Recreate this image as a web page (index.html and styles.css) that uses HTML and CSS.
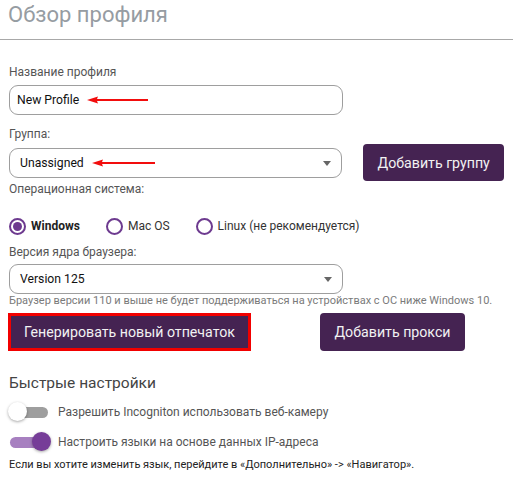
FILE: index.html
```html
<!DOCTYPE html>
<html lang="ru">

<head>
    <meta charset="UTF-8">
    <meta name="viewport" content="width=device-width, initial-scale=1.0">
    <title>Обзор профиля</title>
    <link rel="stylesheet" href="styles.css">
</head>

<body>
    <header class="page-header">
        <h1>Обзор профиля</h1>
    </header>

    <main class="profile-form">
        <label class="field-label label-name">Название профиля</label>
        <div class="field">
            <span class="field-value">New Profile</span>
            <svg class="hint-arrow" width="61" height="8" viewBox="0 0 61 8">
                <path d="M0 4 L11 0.5 L10 3 L61 3 L61 5 L10 5 L11 7.5 Z" fill="#f20d0d" />
            </svg>
        </div>

        <label class="field-label label-group">Группа:</label>
        <div class="group-row">
            <div class="field select">
                <span class="field-value pad">Unassigned</span>
                <svg class="hint-arrow" width="63" height="8" viewBox="0 0 63 8">
                    <path d="M0 4 L11 0.5 L10 3 L63 3 L63 5 L10 5 L11 7.5 Z" fill="#f20d0d" />
                </svg>
                <span class="caret"></span>
            </div>
            <button type="button" class="btn btn-group">Добавить группу</button>
        </div>

        <label class="field-label label-os">Операционная система:</label>
        <div class="radio-row">
            <span class="radio checked"><span class="dot"></span></span>
            <span class="radio-text bold">Windows</span>
            <span class="radio"></span>
            <span class="radio-text">Mac OS</span>
            <span class="radio"></span>
            <span class="radio-text">Linux (не рекомендуется)</span>
        </div>

        <label class="field-label label-version">Версия ядра браузера:</label>
        <div class="field select">
            <span class="field-value pad">Version 125</span>
            <span class="caret"></span>
        </div>
        <div class="helper">Браузер версии 110 и выше не будет поддерживаться на устройствах с ОС ниже Windows 10.</div>

        <div class="button-row">
            <button type="button" class="btn btn-generate">Генерировать новый отпечаток</button>
            <button type="button" class="btn btn-proxy">Добавить прокси</button>
        </div>

        <h2 class="section-title">Быстрые настройки</h2>
        <div class="toggle-row">
            <span class="toggle"><span class="knob"></span></span>
            <span class="toggle-text">Разрешить Incogniton использовать веб-камеру</span>
        </div>
        <div class="toggle-row second">
            <span class="toggle on"><span class="knob"></span></span>
            <span class="toggle-text">Настроить языки на основе данных IP-адреса</span>
        </div>
        <div class="note">Если вы хотите изменить язык, перейдите в «Дополнительно» -&gt; «Навигатор».</div>
    </main>
</body>

</html>
```

FILE: styles.css
```css
body {
    margin: 0;
    padding: 0;
    font-family: Roboto, 'Liberation Sans', sans-serif;
    background: #ffffff;
    color: #333;
}

.page-header {
    height: 39px;
    border-bottom: 1px solid #a8a8a8;
    padding: 0 8px;
}

.page-header h1 {
    margin: 0;
    padding-top: 2px;
    font-size: 22px;
    line-height: 26px;
    font-weight: normal;
    color: #969ca2;
}

.profile-form {
    padding: 0 9px;
}

.field-label {
    display: block;
    font-size: 12px;
    line-height: 16px;
    color: #555;
}

.label-name {
    margin-top: 24px;
}

.label-group {
    margin-top: 11px;
}

.label-os {
    margin-top: 0;
}

.label-version {
    margin-top: 9px;
}

.field {
    display: flex;
    align-items: center;
    box-sizing: border-box;
    width: 334px;
    height: 30px;
    margin-top: 5px;
    border: 1px solid #9e9e9e;
    border-radius: 9px;
    position: relative;
}

.field-value {
    font-size: 12.2px;
    color: #111;
    padding-left: 7px;
}

.field-value.pad {
    padding-left: 10px;
}

.hint-arrow {
    margin-left: 8px;
}

.select {
    margin-top: 4px;
}

.caret {
    position: absolute;
    right: 10px;
    top: 12px;
    width: 0;
    height: 0;
    border-left: 4.5px solid transparent;
    border-right: 4.5px solid transparent;
    border-top: 5px solid #666;
}

.group-row {
    display: flex;
    align-items: flex-start;
    margin-top: 2px;
}

.btn {
    font-family: Roboto, 'Liberation Sans', sans-serif;
    font-size: 14.2px;
    color: #f2f2f2;
    background-color: #452352;
    border: none;
    border-radius: 4px;
    height: 37px;
    padding: 0;
    cursor: pointer;
}

.btn-group {
    width: 141px;
    margin-left: 21px;
}

.radio-row {
    display: flex;
    align-items: center;
    height: 18px;
    margin-top: 20px;
    font-size: 12px;
}

.radio {
    display: flex;
    align-items: center;
    justify-content: center;
    box-sizing: border-box;
    width: 17px;
    height: 17px;
    border: 2px solid #6d3a8f;
    border-radius: 50%;
}

.radio .dot {
    width: 9px;
    height: 9px;
    border-radius: 50%;
    background: #6d3a8f;
}

.radio-text {
    margin-left: 5px;
    margin-right: 26px;
    color: #333;
}

.radio-text.bold {
    font-weight: bold;
    color: #222;
}

.helper {
    font-size: 11px;
    line-height: 13px;
    color: #7a7a7a;
    margin-top: 0;
    white-space: nowrap;
}

.button-row {
    display: flex;
    margin-top: 6px;
    margin-left: -1px;
}

.btn-generate {
    box-sizing: border-box;
    width: 243px;
    height: 38px;
    border: 3px solid #f20000;
    border-radius: 0;
}

.btn-proxy {
    width: 145px;
    height: 38px;
    margin-left: 69px;
}

.section-title {
    margin: 22px 0 0;
    font-size: 15.5px;
    line-height: 20px;
    font-weight: normal;
    color: #444;
}

.toggle-row {
    display: flex;
    align-items: center;
    height: 22px;
    margin-top: 8px;
    margin-left: -1px;
}

.toggle-row.second {
    margin-top: 8px;
}

.toggle {
    position: relative;
    display: block;
    width: 43px;
    height: 20px;
}

.toggle::before {
    content: "";
    position: absolute;
    left: 2px;
    right: 3px;
    top: 5px;
    height: 11px;
    border-radius: 6px;
    background: #9e9e9e;
}

.toggle .knob {
    position: absolute;
    left: 0;
    top: 0;
    width: 19px;
    height: 19px;
    border-radius: 50%;
    background: #ffffff;
    box-shadow: 0 1px 3px rgba(0, 0, 0, 0.35);
}

.toggle.on::before {
    background: #a780c0;
}

.toggle.on .knob {
    left: auto;
    right: 0;
    background: #763d98;
}

.toggle-text {
    margin-left: 7px;
    font-size: 12px;
    color: #555;
}

.note {
    margin-top: 5px;
    font-size: 11px;
    line-height: 14px;
    color: #222;
    white-space: nowrap;
}
```
